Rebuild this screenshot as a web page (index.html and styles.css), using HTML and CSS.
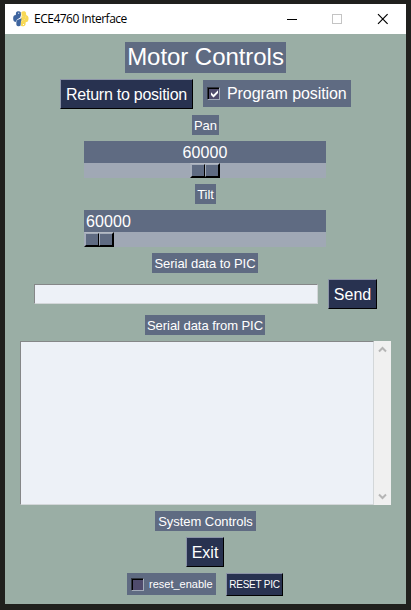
FILE: index.html
```html
<!DOCTYPE html>
<html lang="en">
<head>
<meta charset="utf-8">
<title>ECE4760 Interface</title>
<link rel="stylesheet" href="styles.css">
</head>
<body>
<div class="window">
  <header class="titlebar">
    <svg class="logo" width="16" height="16" viewBox="0 0 16 16">
      <path d="M7.8 1.2C6.8 0 3.8 0 3 1.7L2.8 4 1 4.5C-.3 6 0 9.3 1.2 10.6L3.2 11 3.8 8.7 7.2 6.6 8 4z" fill="#3f659f"/>
      <path d="M8.3 1.2C9.6 0 12.3 0 13 1.7L13.2 4 14.8 5C16 6.5 15.7 9.5 14.5 10.8L12.7 11.2 12.5 13.8C11.5 15.7 8.9 15.6 8 14.7L8 10.5 12 8 12.4 5.5 8.8 5.2z" fill="#f8d956"/>
      <path d="M3.3 11.3L4.3 8.9 8 7.4 11.5 5.2 11.5 7.4 8 10 7.6 14.6C6.6 15.7 4 15.4 3.4 14z" fill="#3f659f"/>
      <path d="M8.4 5.3L12.5 5.2 12 8 8.3 10.2z" fill="#f8d956"/>
      <path d="M5.2 1.7h1v1h-1zM10 13h1v1h-1z" fill="#fff"/>
    </svg>
    <span class="caption">ECE4760 Interface</span>
    <svg class="controls" width="117" height="12" viewBox="0 0 117 12" fill="none" shape-rendering="crispEdges">
      <path d="M8 6.500h10" stroke="#000"/>
      <rect x="53.500" y="1.500" width="9" height="9" stroke="#c4c4c4"/>
      <path d="M99 1.200l9.600 9.600M108.600 1.200l-9.600 9.600" stroke="#000" stroke-width="1.200" shape-rendering="auto"/>
    </svg>
  </header>
  <main class="content">
    <h1 class="label heading">Motor Controls</h1>
    <div class="row actions">
      <button class="btn return">Return to position</button>
      <div class="label check program"><span class="box"><svg width="9" height="9" viewBox="0 0 9 9"><path d="M1 3.300L3.500 5.800 8 1.300V4L3.500 8.400 1 6z" fill="#fff"/></svg></span><span>Program position</span></div>
    </div>
    <div class="label small pan">Pan</div>
    <div class="slider">
      <div class="value centered">60000</div>
      <div class="trough"><div class="thumb middle"><i></i><i></i></div></div>
    </div>
    <div class="label small tilt">Tilt</div>
    <div class="slider">
      <div class="value">60000</div>
      <div class="trough"><div class="thumb"><i></i><i></i></div></div>
    </div>
    <div class="label small to-pic">Serial data to PIC</div>
    <div class="row send-row">
      <div class="field input"></div>
      <button class="btn send">Send</button>
    </div>
    <div class="label small from-pic">Serial data from PIC</div>
    <div class="output">
      <div class="field log"></div>
      <div class="scrollbar">
        <svg width="9" height="7" viewBox="0 0 9 7"><path d="M1 5.500L4.500 2 8 5.500" fill="none" stroke="#b5b5b5" stroke-width="2"/></svg>
        <svg width="9" height="7" viewBox="0 0 9 7"><path d="M1 1.500L4.500 5 8 1.500" fill="none" stroke="#b5b5b5" stroke-width="2"/></svg>
      </div>
    </div>
    <div class="label small system">System Controls</div>
    <button class="btn exit">Exit</button>
    <div class="row reset-row">
      <div class="label check enable"><span class="box"></span><span>reset_enable</span></div>
      <button class="btn reset">RESET PIC</button>
    </div>
  </main>
</div>
</body>
</html>
```

FILE: styles.css
```css
* { box-sizing: border-box; }
body {
  margin: 0;
  width: 411px;
  height: 610px;
  padding: 4px 5px 6px;
  overflow: hidden;
  background: #20201d;
  font-family: "Liberation Sans", Arial, sans-serif;
  color: #fff;
}
.window { width: 401px; height: 600px; background: #9aaea5; }
.titlebar {
  display: flex;
  align-items: center;
  height: 30px;
  padding-left: 8px;
  background: #fff;
}
.caption {
  margin-left: 5px;
  font: 12px/16px "Open Sans", "Noto Sans", sans-serif;
  letter-spacing: -0.5px;
  color: #000;
  white-space: nowrap;
}
.controls { margin: 0 10px 0 auto; }
.content {
  display: flex;
  flex-direction: column;
  align-items: flex-start;
  gap: 6px;
  padding-top: 8px;
}
.row { display: flex; gap: 10px; }
.label {
  display: flex;
  align-items: center;
  justify-content: center;
  background: #5f6b82;
  white-space: nowrap;
}
.heading { width: 161px; height: 31px; margin: 0 0 0 120px; padding-bottom: 2px; font-size: 24px; font-weight: 400; letter-spacing: -0.05px; }
.small { height: 20px; padding-top: 1px; font-size: 13px; letter-spacing: -0.05px; }
.pan { width: 27px; margin-left: 187px; }
.tilt { width: 21px; margin-left: 190px; }
.to-pic { width: 106px; margin-left: 147px; }
.from-pic { width: 120px; margin-left: 140px; }
.system { width: 101px; margin-left: 150px; }
.btn {
  display: flex;
  align-items: center;
  justify-content: center;
  height: 30px;
  padding: 2px 0 0;
  border: 1px solid;
  border-color: #8b93a7 #000 #000 #8b93a7;
  background: #283250;
  color: #fff;
  font: 16px "Liberation Sans", Arial, sans-serif;
  white-space: nowrap;
}
.actions { margin-left: 55px; }
.return { width: 133px; letter-spacing: -0.25px; }
.check { justify-content: flex-start; padding-left: 4px; }
.program { width: 148px; height: 27px; margin-top: 1px; gap: 7px; font-size: 16px; letter-spacing: -0.08px; }
.box {
  width: 13px;
  height: 13px;
  padding: 1px;
  border: 1px solid;
  border-color: #30343e #a3abba #a3abba #30343e;
  box-shadow: inset 1px 1px #000;
  background: #4f4b6c;
}
.box svg { display: block; margin: 0 1px; }
.slider { width: 242px; height: 37px; margin-left: 79px; }
.value { height: 22px; padding-left: 2px; background: #5f6b82; font-size: 16px; line-height: 23px; letter-spacing: 0.1px; }
.centered { padding: 0; text-align: center; }
.trough { height: 15px; background: #a0a8b5; }
.thumb {
  display: flex;
  width: 30px;
  height: 15px;
  border: 1px solid;
  border-color: #b4bac4 #000 #000 #a5adba;
}
.middle { margin-left: 106px; }
.thumb i {
  width: 14px;
  height: 13px;
  border: 1px solid;
  border-color: #a5adba #000 #000 #a5adba;
  background: #5f6b82;
}
.send-row { margin-left: 29px; }
.field {
  border: 1px solid;
  border-color: #858788 #d3d7d9 #d3d7d9 #858788;
  background: #edf1f7;
}
.input { width: 284px; height: 20px; margin-top: 5px; }
.send { width: 49px; }
.output { display: flex; width: 371px; height: 164px; margin-left: 15px; }
.log { width: 354px; }
.scrollbar {
  display: flex;
  flex-direction: column;
  align-items: center;
  justify-content: space-between;
  width: 17px;
  padding: 5px 0;
  background: #f0f0f0;
}
.exit { width: 38px; margin-left: 181px; }
.reset-row { margin-left: 122px; }
.enable { width: 89px; height: 22px; gap: 5px; font-size: 11px; }
.reset { width: 57px; height: 23px; padding-top: 0; font-size: 10px; letter-spacing: -0.25px; }
```
